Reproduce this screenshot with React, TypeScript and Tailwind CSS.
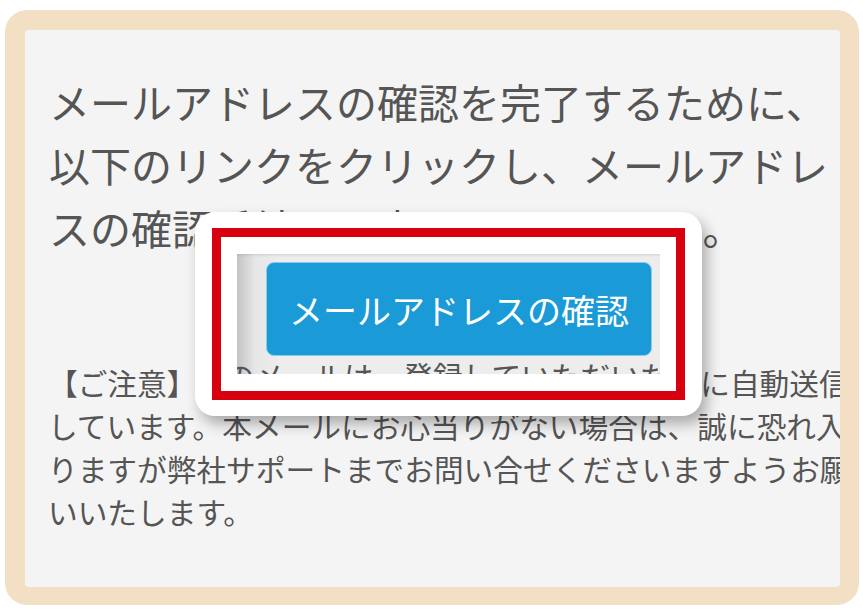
import React from 'react';

const notice = [
  '【ご注意】このメールは、登録していただいた方に自動送信',
  'しています。本メールにお心当りがない場合は、誠に恐れ入',
  'りますが弊社サポートまでお問い合せくださいますようお願',
  'いいたします。',
];

const FocusCard: React.FC = () => (
  <div className="absolute left-[170px] top-[182px] w-[507px] rounded-[20px] bg-white px-[17px] py-[16px] shadow-[5px_8px_14px_rgba(0,0,0,0.3)]">
    <div className="border-[9px] border-[#d7000f] bg-white px-[16px] py-[17px]">
      {/* cropped capture of the button area */}
      <div className="flex h-[120px] flex-col overflow-hidden bg-[linear-gradient(to_right,#c4c4c4,#e6e6e6_18px,#ededed_40px)] pt-[8px] shadow-[inset_0_3px_3px_-2px_rgba(0,0,0,0.12)]">
        <div className="ml-[29px] flex h-[94px] w-[386px] shrink-0 items-center justify-center rounded-[8px] border border-[#86cdec] bg-[#1b9ad8] text-[34px] text-white">
          メールアドレスの確認
        </div>
        <div className="-ml-[190px] -mt-[2px] whitespace-nowrap text-[29.7px] leading-[43px] text-[#555]">
          {notice[0]}
        </div>
      </div>
    </div>
  </div>
);

export default function App() {
  return (
    <div className="h-[613px] w-[863px] bg-white pb-[8px] pl-[5px] pr-[4px] pt-[10px] font-['Noto_Sans_CJK_JP',sans-serif]">
      <div className="h-full rounded-[22px] bg-[#f2dfc4] pb-[18px] pl-[20px] pr-[19px] pt-[20px]">
        <div className="relative h-full overflow-hidden rounded-[4px] bg-[#f4f4f4] text-[#555]">
          <div className="whitespace-nowrap pl-[24px] pt-[40px] text-[41px] leading-[63px]">
            <p>メールアドレスの確認を完了するために、</p>
            <p>以下のリンクをクリックし、メールアドレ</p>
            <p>スの確認手続きを完了してください。</p>
          </div>
          <div className="mt-[102px] whitespace-nowrap pl-[23px] text-[29.7px] leading-[43px]">
            {notice.map((line) => (
              <p key={line}>{line}</p>
            ))}
          </div>
          <FocusCard />
        </div>
      </div>
    </div>
  );
}
